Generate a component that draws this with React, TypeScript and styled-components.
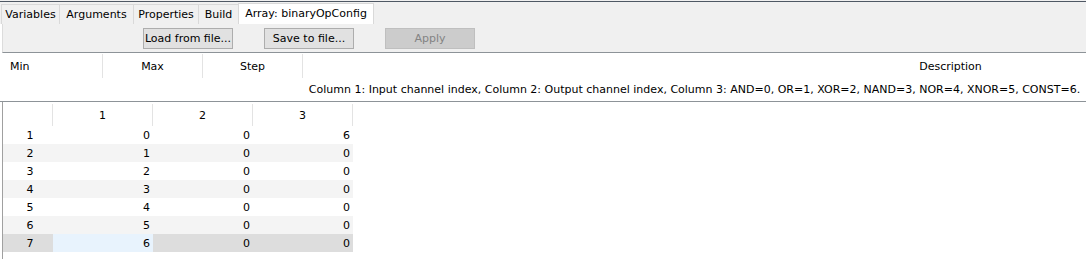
import React from "react";
import styled, { createGlobalStyle } from "styled-components";

const GlobalStyle = createGlobalStyle`
  html, body { margin: 0; padding: 0; background: #ffffff; overflow: hidden; }
  body { font-family: "DejaVu Sans", "Liberation Sans", sans-serif; font-size: 11px; color: #000; }
  * { box-sizing: border-box; }
`;

const Page = styled.div`
  width: 1086px;
  height: 259px;
  background: #ffffff;
  display: flex;
  flex-direction: column;
`;

const TopEdge = styled.div`
  height: 1px;
  background: #f0f0f0;
`;

const DarkRule = styled.div`
  height: 1px;
  background: #4f5864;
`;

const TabBar = styled.div`
  height: 22px;
  background: #f0f0f0;
  display: flex;
  align-items: flex-end;
  padding-left: 2px;
`;

const Tab = styled.div<{ $w: number; $active?: boolean }>`
  width: ${(p) => p.$w}px;
  height: ${(p) => (p.$active ? 21 : 20)}px;
  display: flex;
  align-items: center;
  justify-content: center;
  white-space: nowrap;
  background: ${(p) => (p.$active ? "#ffffff" : "#f0f0f0")};
  border: 1px solid #d9d9d9;
  border-bottom: none;
  margin-left: -1px;
  padding-bottom: 1px;
`;

const Toolbar = styled.div`
  height: 29px;
  background: #f0f0f0;
  border-bottom: 1px solid #8d9398;
  border-left: 1px solid #dcdcdc;
  margin-left: 2px;
  display: flex;
  align-items: flex-start;
  padding: 4px 0 0 140px;
  gap: 31px;
`;

const Button = styled.div<{ $disabled?: boolean }>`
  width: 90px;
  height: 21px;
  display: flex;
  align-items: center;
  justify-content: center;
  white-space: nowrap;
  background: ${(p) => (p.$disabled ? "#cccccc" : "#e1e1e1")};
  border: 1px solid ${(p) => (p.$disabled ? "#bfbfbf" : "#adadad")};
  color: ${(p) => (p.$disabled ? "#838383" : "#000000")};
`;

const PropGrid = styled.div`
  height: 49px;
  border-bottom: 1px solid #8d9398;
  display: flex;
  flex-direction: column;
`;

const PropHeader = styled.div`
  height: 25px;
  display: flex;
  padding-top: 1px;
`;

const PropHeadCell = styled.div<{ $w?: number; $align?: string; $pad?: number }>`
  ${(p) => (p.$w ? `width: ${p.$w}px;` : "flex: 1;")}
  height: 24px;
  display: flex;
  align-items: center;
  justify-content: ${(p) => p.$align || "center"};
  padding-left: ${(p) => p.$pad || 0}px;
  border-right: 1px solid #e3e3e3;
  &:last-child { border-right: none; }
`;

const PropRow = styled.div`
  height: 23px;
  display: flex;
  align-items: center;
  padding-left: 303px;
`;

const DescText = styled.div`
  flex: 1;
  text-align: center;
  white-space: nowrap;
`;

const ArrayTable = styled.div`
  flex: 1;
  margin-left: 2px;
  border-left: 1px solid #a0a0a0;
  display: flex;
  flex-direction: column;
`;

const HeadRow = styled.div`
  height: 24px;
  display: flex;
  padding-top: 2px;
`;

const HeadCell = styled.div`
  width: 100px;
  height: 22px;
  display: flex;
  align-items: center;
  justify-content: center;
  border-right: 1px solid #e3e3e3;
`;

const CornerCell = styled.div`
  width: 50px;
  height: 22px;
  border-right: 1px solid #e3e3e3;
`;

const Row = styled.div<{ $alt?: boolean; $selected?: boolean }>`
  width: 350px;
  height: 18px;
  display: flex;
  background: ${(p) => (p.$selected ? "#dddddd" : p.$alt ? "#f4f4f4" : "#ffffff")};
`;

const RowHead = styled.div`
  width: 50px;
  display: flex;
  align-items: center;
  justify-content: center;
  padding-left: 4px;
`;

const Cell = styled.div<{ $current?: boolean }>`
  width: 100px;
  display: flex;
  align-items: center;
  justify-content: flex-end;
  padding-right: 3px;
  background: ${(p) => (p.$current ? "#e8f3fd" : "transparent")};
`;

const tabs = [
  { label: "Variables", w: 59 },
  { label: "Arguments", w: 75 },
  { label: "Properties", w: 66 },
  { label: "Build", w: 41 },
  { label: "Array: binaryOpConfig", w: 136, active: true },
];

const data = [
  [0, 0, 6],
  [1, 0, 0],
  [2, 0, 0],
  [3, 0, 0],
  [4, 0, 0],
  [5, 0, 0],
  [6, 0, 0],
];

export default function App() {
  return (
    <Page>
      <GlobalStyle />
      <TopEdge />
      <DarkRule />
      <TabBar>
        {tabs.map((t) => (
          <Tab key={t.label} $w={t.w} $active={t.active}>
            {t.label}
          </Tab>
        ))}
      </TabBar>
      <Toolbar>
        <Button>Load from file...</Button>
        <Button>Save to file...</Button>
        <Button $disabled>Apply</Button>
      </Toolbar>
      <PropGrid>
        <PropHeader>
          <PropHeadCell $w={103} $align="flex-start" $pad={10}>Min</PropHeadCell>
          <PropHeadCell $w={100}>Max</PropHeadCell>
          <PropHeadCell $w={100}>Step</PropHeadCell>
          <PropHeadCell $pad={512}>Description</PropHeadCell>
        </PropHeader>
        <PropRow>
          <DescText>
            Column 1: Input channel index, Column 2: Output channel index, Column 3: AND=0, OR=1, XOR=2, NAND=3, NOR=4, XNOR=5, CONST=6.
          </DescText>
        </PropRow>
      </PropGrid>
      <ArrayTable>
        <HeadRow>
          <CornerCell />
          <HeadCell>1</HeadCell>
          <HeadCell>2</HeadCell>
          <HeadCell>3</HeadCell>
        </HeadRow>
        {data.map((r, i) => (
          <Row key={i} $alt={i % 2 === 1} $selected={i === 6}>
            <RowHead>{i + 1}</RowHead>
            {r.map((v, j) => (
              <Cell key={j} $current={i === 6 && j === 0}>
                {v}
              </Cell>
            ))}
          </Row>
        ))}
      </ArrayTable>
    </Page>
  );
}
